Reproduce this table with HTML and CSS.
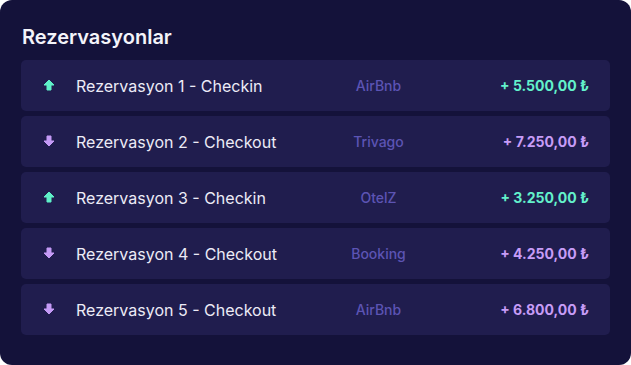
FILE: index.html
```html
<!DOCTYPE html>
<html lang="tr">
<head>
<meta charset="utf-8">
<link rel="stylesheet" href="styles.css">
</head>
<body>
<div class="card">
  <h2 class="title">Rezervasyonlar</h2>
  <div class="list">
    <div class="row">
      <span class="icon up"><svg viewBox="0 0 12 12" width="12" height="12"><path d="M6 1L11 6H8V11H4V6H1Z" fill="currentColor" stroke="currentColor" stroke-width="1" stroke-linejoin="round"/></svg></span>
      <span class="name">Rezervasyon 1 - Checkin</span>
      <span class="platform">AirBnb</span>
      <span class="amount up">+ 5.500,00 ₺</span>
    </div>
    <div class="row">
      <span class="icon down"><svg viewBox="0 0 12 12" width="12" height="12"><path d="M6 11L11 6H8V1H4V6H1Z" fill="currentColor" stroke="currentColor" stroke-width="1" stroke-linejoin="round"/></svg></span>
      <span class="name">Rezervasyon 2 - Checkout</span>
      <span class="platform">Trivago</span>
      <span class="amount down">+ 7.250,00 ₺</span>
    </div>
    <div class="row">
      <span class="icon up"><svg viewBox="0 0 12 12" width="12" height="12"><path d="M6 1L11 6H8V11H4V6H1Z" fill="currentColor" stroke="currentColor" stroke-width="1" stroke-linejoin="round"/></svg></span>
      <span class="name">Rezervasyon 3 - Checkin</span>
      <span class="platform">OtelZ</span>
      <span class="amount up">+ 3.250,00 ₺</span>
    </div>
    <div class="row">
      <span class="icon down"><svg viewBox="0 0 12 12" width="12" height="12"><path d="M6 11L11 6H8V1H4V6H1Z" fill="currentColor" stroke="currentColor" stroke-width="1" stroke-linejoin="round"/></svg></span>
      <span class="name">Rezervasyon 4 - Checkout</span>
      <span class="platform">Booking</span>
      <span class="amount down">+ 4.250,00 ₺</span>
    </div>
    <div class="row">
      <span class="icon down"><svg viewBox="0 0 12 12" width="12" height="12"><path d="M6 11L11 6H8V1H4V6H1Z" fill="currentColor" stroke="currentColor" stroke-width="1" stroke-linejoin="round"/></svg></span>
      <span class="name">Rezervasyon 5 - Checkout</span>
      <span class="platform">AirBnb</span>
      <span class="amount down">+ 6.800,00 ₺</span>
    </div>
  </div>
</div>
</body>
</html>
```
FILE: styles.css
```css
* { box-sizing: border-box; }
html, body {
  margin: 0;
  padding: 0;
  background: #ffffff;
}
body {
  font-family: Inter, "Noto Sans", sans-serif;
  width: 631px;
  height: 365px;
  overflow: hidden;
}
.card {
  width: 631px;
  height: 365px;
  background: #14123a;
  border-radius: 12px;
  padding: 24px 21px 0 21px;
}
.title {
  margin: 0 0 0 1px;
  font-size: 20px;
  font-weight: 600;
  line-height: 26px;
  color: #f4f4fa;
  height: 36px;
}
.list {
  display: flex;
  flex-direction: column;
  gap: 5px;
}
.row {
  height: 51px;
  background: #201d4e;
  border-radius: 5px;
  display: grid;
  grid-template-columns: 12px 226px 195px 1fr;
  align-items: center;
  padding: 0 21px 0 22px;
}
.icon {
  display: flex;
  height: 12px;
}
.icon svg { display: block; margin-top: -1px; }
.icon.up { color: #5ff0c8; }
.icon.down { color: #c49af6; }
.name {
  font-size: 16px;
  color: #ecebf6;
  padding-left: 21px;
  white-space: nowrap;
}
.platform {
  font-size: 14px;
  font-weight: 500;
  color: #5c54b4;
  text-align: center;
}
.amount {
  font-size: 14px;
  font-weight: 700;
  text-align: right;
}
.amount.up { color: #63f1cb; }
.amount.down { color: #c79cf7; }
```
